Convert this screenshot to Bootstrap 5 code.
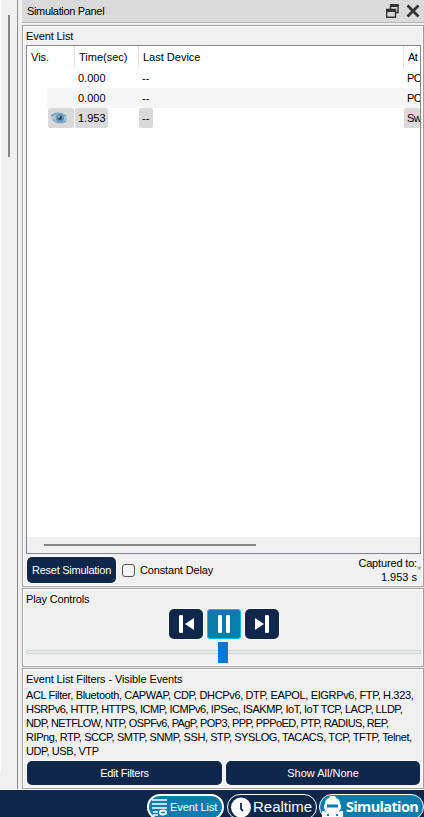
<!DOCTYPE html>
<html lang="en">
<head>
<meta charset="utf-8">
<meta name="viewport" content="width=device-width, initial-scale=1">
<title>Simulation Panel</title>
<link href="https://cdn.jsdelivr.net/npm/bootstrap@5.3.0/dist/css/bootstrap.min.css" rel="stylesheet">
<style>
html,body{height:817px;overflow:hidden}
body{font:11px/14px "Liberation Sans",Arial,sans-serif;color:#000;background:#f0f0f0;width:424px}
svg{display:block;flex:none}
.upper{height:789px}
.gutter{width:22px;flex:none}
.gutter .paper{width:1px;height:772px;background:#fff}
.gutter .thumb{width:2px;height:142px;margin:15px 0 0 7px;background:#858585}
.gutter .edge{width:1px;margin-left:7px;background:#8b8b8b}
.title{height:23px;background:#dadada;border-bottom:1px solid #b5b5b5;padding:0 4px 0 5px}
.box{border:1px solid #a0a0a0;box-shadow:inset 1px 1px #fff,inset -1px -1px #fff;width:402px}
.box-events{height:562px;margin-top:2px;padding:3px 2px 0 3px}
.box-play{height:79px;margin-top:1px;padding:3px 2px 0 3px}
.box-filters{height:121px;margin-top:1px;padding:3px 2px 0 3px}
.grid-frame{height:509px;width:395px;border:1px solid #828790;background:#fff;margin-top:2px}
.g-row{height:20px;display:grid;grid-template-columns:20px 27px 64px 265px 17px}
.g-row>*{overflow:hidden;white-space:nowrap;line-height:20px}
.g-head{height:22px;grid-template-columns:47px 64px 265px 17px}
.g-head>*{line-height:23px;padding-left:4px}
.g-head>*+*{border-left:1px solid #e3e3e3}
.g-row.alt>*+*{background:#f5f5f5}
.g-row:not(.g-head)>*{padding-left:4px}
.g-row>:last-child{letter-spacing:-.6px}
.g-row.picked span{background:#d9d9d9;display:block;border-radius:2px;padding-left:3px;height:20px}
.g-row.picked>*{padding-left:1px}
.picked .eye{width:26px}
.picked .tm{width:33px}
.picked .dv{width:14px}
.hscroll{height:16px;background:#f0f0f0;padding:7px 0 0 17px}
.hscroll div{width:212px;height:2px;background:#858585}
.actions{height:32px;padding-left:1px}
.navy,.navy:hover{background:#0f274a;color:#fff;border:0;font-size:11px;line-height:14px;padding:0;border-radius:5px;box-shadow:0 0 0 1px #f9f9f9}
.reset{width:89px;height:26px;letter-spacing:-.26px}
.chk.form-check-input{width:13px;height:13px;margin:0 5px 0 6px;border:1px solid #555;border-radius:3px;background:#f3f3f3}
.star{color:#999;width:4px}
.media{width:34px;height:30px}
.media.on{background:#077cad;border:1px solid #0db9e9;border-radius:3px}
.media-row{margin-top:3px;padding-left:1px}
.track{height:4px;width:395px;border:1px solid #d3d6d6;background:#e7eaea;margin-top:11px}
.knob{width:10px;height:21px;background:#0078d7;position:relative;left:191px;top:-9px}
.protocols{margin-top:2px}
.wide{height:24px}
.wide-row{margin-top:3px;padding:0 1px}
.w-edit{width:195px;letter-spacing:-.28px}
.w-show{width:194px}
.foot{height:28px;background:#0f274a;border-top:1px solid #fff;padding:4px 0 0 147px}
.pill{height:26px;border:1px solid #fff;border-radius:13px;color:#fff;flex:none;white-space:nowrap;background:#0f274a}
.teal,.pill.teal{background:#077cad}
.p-list{width:77px;border-width:2px;margin-right:3px;padding-left:3px}
.p-real{width:90px;font-size:15px;margin-right:2px;padding-left:3px}
.p-sim{width:105px;font:bold 14.5px "Open Sans",sans-serif;padding-left:2px}
.p-list span{margin-left:2px;letter-spacing:-.1px}
.p-real span{margin-left:2px}
.p-sim span{margin-left:3px;letter-spacing:-.65px}
.p-real span,.p-sim span{position:relative;top:-.5px}
.t1{letter-spacing:-.33px}.t2{letter-spacing:-.1px}.t3{letter-spacing:-.16px}
.t4{letter-spacing:-.36px}.t5{letter-spacing:-.42px}
.t6{letter-spacing:-.47px}.t7{letter-spacing:-.59px}
</style>
<script src="https://cdn.jsdelivr.net/npm/bootstrap@5.3.0/dist/js/bootstrap.bundle.min.js"></script>
</head>
<body>
<div class="upper d-flex">
  <div class="gutter d-flex">
    <div class="paper"></div><div class="thumb"></div><div class="edge"></div>
  </div>
  <main>
    <header class="title d-flex align-items-center">
      <span class="t1 me-auto">Simulation Panel</span>
      <svg width="13" height="14" viewBox="0 0 13 14" fill="none" stroke="#333"><path d="M4.500 5V1.500h7.500v7H9" stroke-width="1.400"/><path d="M4 1.500h8.700" stroke-width="3"/><path d="M.7 5.500h8.800v7.800H.7z" stroke-width="1.400"/><path d="M0 6.500h10" stroke-width="3"/></svg>
      <svg style="margin-left:7px" width="14" height="14" viewBox="0 0 14 14" stroke="#333" stroke-width="2.800"><path d="M1.500 1.500l11 11M12.500 1.500l-11 11"/></svg>
    </header>
    <section class="box box-events">
      <div class="t2">Event List</div>
      <div class="grid-frame d-flex flex-column">
        <div class="g-row g-head"><div>Vis.</div><div>Time(sec)</div><div>Last Device</div><div>At</div></div>
        <div class="g-row"><div></div><div></div><div>0.000</div><div>--</div><div>PC</div></div>
        <div class="g-row alt"><div></div><div></div><div>0.000</div><div>--</div><div>PC</div></div>
        <div class="g-row picked"><div></div>
          <div><span class="eye"><svg width="17" height="20" viewBox="0 0 17 20"><path d="M0 7Q7 2 15 7L16 12Q8 18 1 11z" fill="#9fc3d8"/><path d="M0 8Q7 3 15 8" fill="none" stroke="#7fa8c0" stroke-width="2"/><circle cx="9" cy="10" r="4" fill="#5f93b3"/><circle cx="9" cy="10" r="2" fill="#26465f"/><circle cx="8" cy="9" r=".8" fill="#fff"/><path d="M2 12q6 5 13 1" fill="none" stroke="#7fa8c0" stroke-width="1.500"/></svg></span></div>
          <div><span class="tm">1.953</span></div><div><span class="dv">--</span></div><div><span>Sw</span></div></div>
        <div class="hscroll mt-auto"><div></div></div>
      </div>
      <div class="actions d-flex align-items-center">
        <button class="btn navy reset">Reset Simulation</button>
        <input class="form-check-input chk" type="checkbox" aria-label="Constant Delay">
        <span class="t3">Constant Delay</span>
        <div class="ms-auto text-end"><span class="t3">Captured to:</span><br>1.953 s</div><span class="star">*</span>
      </div>
    </section>
    <section class="box box-play">
      <div class="t3">Play Controls</div>
      <div class="media-row d-flex justify-content-center gap-1">
        <button class="btn navy media" aria-label="Back"><svg width="34" height="30" fill="#fff"><rect x="10" y="6" width="4" height="18" rx="1"/><path d="M25 9v12l-9-6z"/></svg></button>
        <button class="btn navy media on" aria-label="Pause"><svg width="32" height="28" fill="#fff"><rect x="10" y="5" width="4" height="18" rx="1"/><rect x="18" y="5" width="4" height="18" rx="1"/></svg></button>
        <button class="btn navy media" aria-label="Forward"><svg width="34" height="30" fill="#fff"><path d="M10 9v12l9-6z"/><rect x="20" y="6" width="4" height="18" rx="1"/></svg></button>
      </div>
      <div class="track"><div class="knob"></div></div>
    </section>
    <section class="box box-filters">
      <div class="t2">Event List Filters - Visible Events</div>
      <div class="protocols text-nowrap"><span class="t4">ACL Filter, Bluetooth, CAPWAP, CDP, DHCPv6, DTP, EAPOL, EIGRPv6, FTP, H.323,</span><br><span class="t6">HSRPv6, HTTP, HTTPS, ICMP, ICMPv6, IPSec, ISAKMP, IoT, IoT TCP, LACP, LLDP,</span><br><span class="t7">NDP, NETFLOW, NTP, OSPFv6, PAgP, POP3, PPP, PPPoED, PTP, RADIUS, REP,</span><br><span class="t5">RIPng, RTP, SCCP, SMTP, SNMP, SSH, STP, SYSLOG, TACACS, TCP, TFTP, Telnet,</span><br><span class="t5">UDP, USB, VTP</span></div>
      <div class="wide-row d-flex gap-1"><button class="btn navy wide w-edit">Edit Filters</button><button class="btn navy wide w-show">Show All/None</button></div>
    </section>
  </main>
</div>
<footer class="foot d-flex">
  <div class="pill teal p-list d-flex align-items-center"><svg width="16" height="18" stroke="#fff" stroke-width="1.500" fill="none"><path d="M0 2h15M0 6h15M0 10h15M1 14h5M1 17h5"/><ellipse cx="11" cy="14.500" rx="3" ry="2" fill="#077cad" stroke-width="2"/></svg><span>Event List</span></div>
  <div class="pill p-real d-flex align-items-center"><svg width="20" height="21"><circle cx="10" cy="10.500" r="10" fill="#fff"/><path d="M10 6v6l2 2" fill="none" stroke="#0f274a" stroke-width="1.800"/></svg><span>Realtime</span></div>
  <div class="pill teal p-sim d-flex align-items-center"><svg width="21" height="24" fill="#fff"><path d="M8 1h5l1 2q4 1 4 6l1 1v3l-2 4h1v-1h3v7H0v-7h3v1h1l-2-4v-3l1-1q0-5 4-6z"/><path d="M5 9.500h11v3H5zM5 19h2v2H5zM14 19h2v2h-2z" fill="#077cad"/></svg><span>Simulation</span></div>
</footer>
</body>
</html>
